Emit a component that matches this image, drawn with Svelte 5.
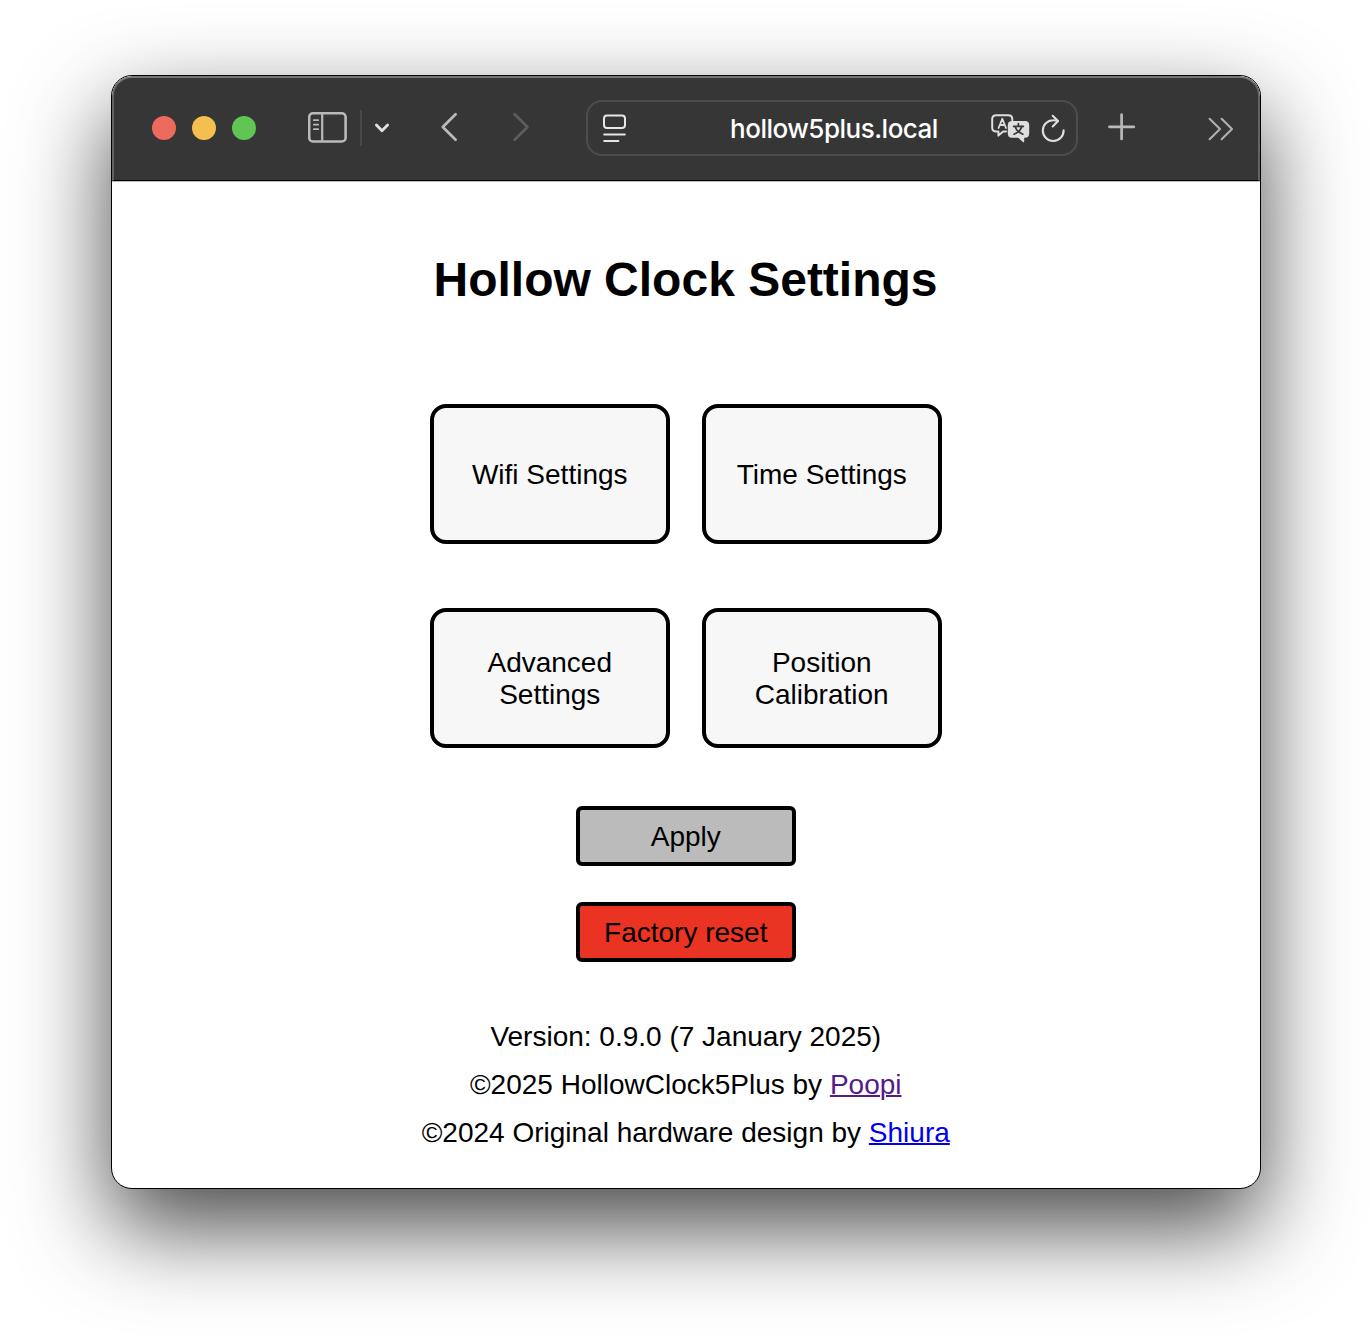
<script>
  const settings = ['Wifi Settings', 'Time Settings', 'Advanced Settings', 'Position Calibration'];
</script>

<main class="desktop">
  <div class="window">
    <header class="toolbar">
      <div class="lights">
        <span class="light close"></span>
        <span class="light minimize"></span>
        <span class="light zoom"></span>
      </div>

      <svg class="sidebar" width="40" height="32" viewBox="0 0 40 32" fill="none" stroke="#b9b9b9" stroke-linecap="round">
        <rect x="1.2" y="1.3" width="36.4" height="28.2" rx="3.8" stroke-width="2.6" />
        <path d="M14.2 1.5V29.3" stroke-width="2.2" stroke-linecap="butt" />
        <path d="M5.8 8.2h4.4M5.8 12.7h4.4M5.8 17.2h4.4" stroke-width="1.7" />
      </svg>
      <span class="divider"></span>
      <svg class="chevron" width="16" height="12" viewBox="0 0 16 12" fill="none" stroke="#e0e0e0" stroke-width="2.8" stroke-linecap="round" stroke-linejoin="round">
        <path d="M2.4 3L8 8.8L13.6 3" />
      </svg>

      <svg class="back" width="20" height="32" viewBox="0 0 20 32" fill="none" stroke="#b9b9b9" stroke-width="2.7" stroke-linecap="round" stroke-linejoin="round">
        <path d="M15.6 3.2L2.8 16L15.6 28.8" />
      </svg>
      <svg class="forward" width="20" height="32" viewBox="0 0 20 32" fill="none" stroke="#5d5d5d" stroke-width="2.7" stroke-linecap="round" stroke-linejoin="round">
        <path d="M3.6 3.2L16.4 16L3.6 28.8" />
      </svg>

      <div class="address">
        <svg width="24" height="30" viewBox="0 0 24 30" fill="none" stroke="#e6e6e6" stroke-width="2" stroke-linecap="round">
          <rect x="1" y="2.4" width="21" height="12.6" rx="3" />
          <path d="M1.2 21.4H21.8M1.2 28H15.4" />
        </svg>
        <span class="url">hollow5plus.local</span>
        <svg class="translate" width="40" height="30" viewBox="0 0 40 30" fill="none">
          <path d="M15 17.6H12.2L7.4 21.6V17.6H5.2Q1.2 17.6 1.2 13.6V5.3Q1.2 1.3 5.2 1.3H17.3Q21.3 1.3 21.3 5.3V6.2" stroke="#dedede" stroke-width="2" stroke-linejoin="round" stroke-linecap="round" />
          <path d="M7.6 14L11.3 4.8L15 14M9 11H13.6" stroke="#dedede" stroke-width="1.8" stroke-linejoin="round" stroke-linecap="round" />
          <path d="M21 7H34Q38.2 7 38.2 11.2V19.6Q38.2 23.8 34 23.8H33.2V27.4Q33.2 29 31.9 27.9L27.2 23.8H21Q16.8 23.8 16.8 19.6V11.2Q16.8 7 21 7Z" fill="#dedede" />
          <path d="M27.4 9.7V12.2M22.6 12.4H32.4M24.2 12.8Q25.7 17.8 31.9 20.2M30.7 12.8Q29.2 17.8 23 20.2" stroke="#363636" stroke-width="1.7" stroke-linecap="round" />
        </svg>
        <svg class="reload" width="24" height="30" viewBox="0 0 24 30" fill="none" stroke="#dedede" stroke-width="2.1" stroke-linecap="round" stroke-linejoin="round">
          <path d="M22.6 16.3A10.4 10.4 0 1 1 12.2 6.2Q14.6 6.1 16.7 7" />
          <path d="M11.7 1.8L17 7L11.7 12.4" />
        </svg>
      </div>

      <svg class="plus" width="28" height="28" viewBox="0 0 28 28" fill="none" stroke="#b9b9b9" stroke-width="2.7" stroke-linecap="round">
        <path d="M13.6 1.6V26M1.4 13.8H25.8" />
      </svg>
      <svg class="more" width="26" height="24" viewBox="0 0 26 24" fill="none" stroke="#b0b0b0" stroke-width="2.1" stroke-linecap="round" stroke-linejoin="round">
        <path d="M1.6 1.8L12 12L1.6 22.2M13.6 1.8L24 12L13.6 22.2" />
      </svg>
    </header>

    <section class="page">
      <h1>Hollow Clock Settings</h1>
      <nav class="grid">
        {#each settings as label}
          <button class="tile">{label}</button>
        {/each}
      </nav>
      <button class="action apply">Apply</button>
      <button class="action reset">Factory reset</button>
      <footer>
        <p>Version: 0.9.0 (7 January 2025)</p>
        <p>©2025 HollowClock5Plus by <a class="visited" href="#poopi">Poopi</a></p>
        <p>©2024 Original hardware design by <a href="#shiura">Shiura</a></p>
      </footer>
    </section>
  </div>
</main>

<style>
  :global(body) {
    margin: 0;
    background: #fff;
  }

  .desktop {
    box-sizing: border-box;
    height: 1336px;
    padding: 75px 111px 0;
    overflow: hidden;
    font-family: 'Liberation Sans', Arial, sans-serif;
    color: #000;
  }

  .window {
    box-sizing: border-box;
    width: 1150px;
    height: 1114px;
    border: 1px solid #000;
    border-radius: 21px;
    overflow: hidden;
    background: #fff;
    box-shadow: 0 38px 92px rgba(0, 0, 0, 0.72);
  }

  .toolbar {
    box-sizing: border-box;
    display: flex;
    align-items: center;
    height: 105px;
    padding: 0 24px 2px 38px;
    background: #363636;
    border: 2px solid #636363;
    border-top-color: #757575;
    border-bottom: 1px solid #000;
    border-radius: 20px 20px 0 0;
  }

  .toolbar svg {
    display: block;
    flex: none;
  }

  .lights {
    display: flex;
    gap: 16px;
  }

  .light {
    width: 24px;
    height: 24px;
    border-radius: 50%;
  }

  .close { background: #ed6a5e; }
  .minimize { background: #f5bf4f; }
  .zoom { background: #61c554; }

  .sidebar { margin: 0 0 0 52px; }

  .divider {
    width: 2px;
    height: 36px;
    margin-left: 12px;
    background: #484848;
  }

  .chevron { margin-left: 12px; }
  .back { margin: 0 0 2px 50px; }
  .forward { margin: 0 0 2px 51px; }

  .address {
    box-sizing: border-box;
    display: flex;
    align-items: center;
    width: 492px;
    height: 56px;
    margin-left: 55px;
    padding: 0 11px 0 15px;
    border: 2px solid #4d4d4d;
    border-radius: 16px;
  }

  .url {
    flex: 1;
    padding: 2px 0 0 50px;
    text-align: center;
    white-space: nowrap;
    color: #fff;
    font: 500 26px/32px Inter, 'Liberation Sans', sans-serif;
    letter-spacing: -0.5px;
  }

  .translate { margin-top: 2px; }
  .reload { margin: 2px 0 0 10px; }
  .plus { margin: 0 0 2px 30px; }
  .more { margin: 2px 0 0 auto; }

  .page {
    display: flex;
    flex-direction: column;
    align-items: center;
    box-shadow: inset 0 1px #bbb;
  }

  h1 {
    margin: 72px 0 0;
    padding-right: 1px;
    font-size: 48px;
    line-height: 54px;
    font-weight: 700;
  }

  .grid {
    display: grid;
    grid-template-columns: 240px 240px;
    gap: 64px 32px;
    margin-top: 97px;
  }

  button {
    box-sizing: border-box;
    margin: 0;
    color: #000;
    border: 4px solid #000;
    font: 28px/32px 'Liberation Sans', Arial, sans-serif;
  }

  .tile {
    height: 140px;
    padding: 2px 26.5px 0 26px;
    border-radius: 16px;
    background: #f7f7f7;
  }

  .action {
    width: 220px;
    height: 60px;
    padding: 2px 0.5px 0 0;
    border-radius: 6px;
  }

  .apply {
    margin-top: 58px;
    background: #bbb;
  }

  .reset {
    margin-top: 36px;
    background: #ea3323;
  }

  footer {
    margin-top: 51px;
    padding-right: 0.5px;
    text-align: center;
    font-size: 28px;
    line-height: 48px;
  }

  p { margin: 0; }

  a {
    color: #0000ee;
    text-decoration-thickness: 2px;
  }

  .visited { color: #551a8b; }
</style>
